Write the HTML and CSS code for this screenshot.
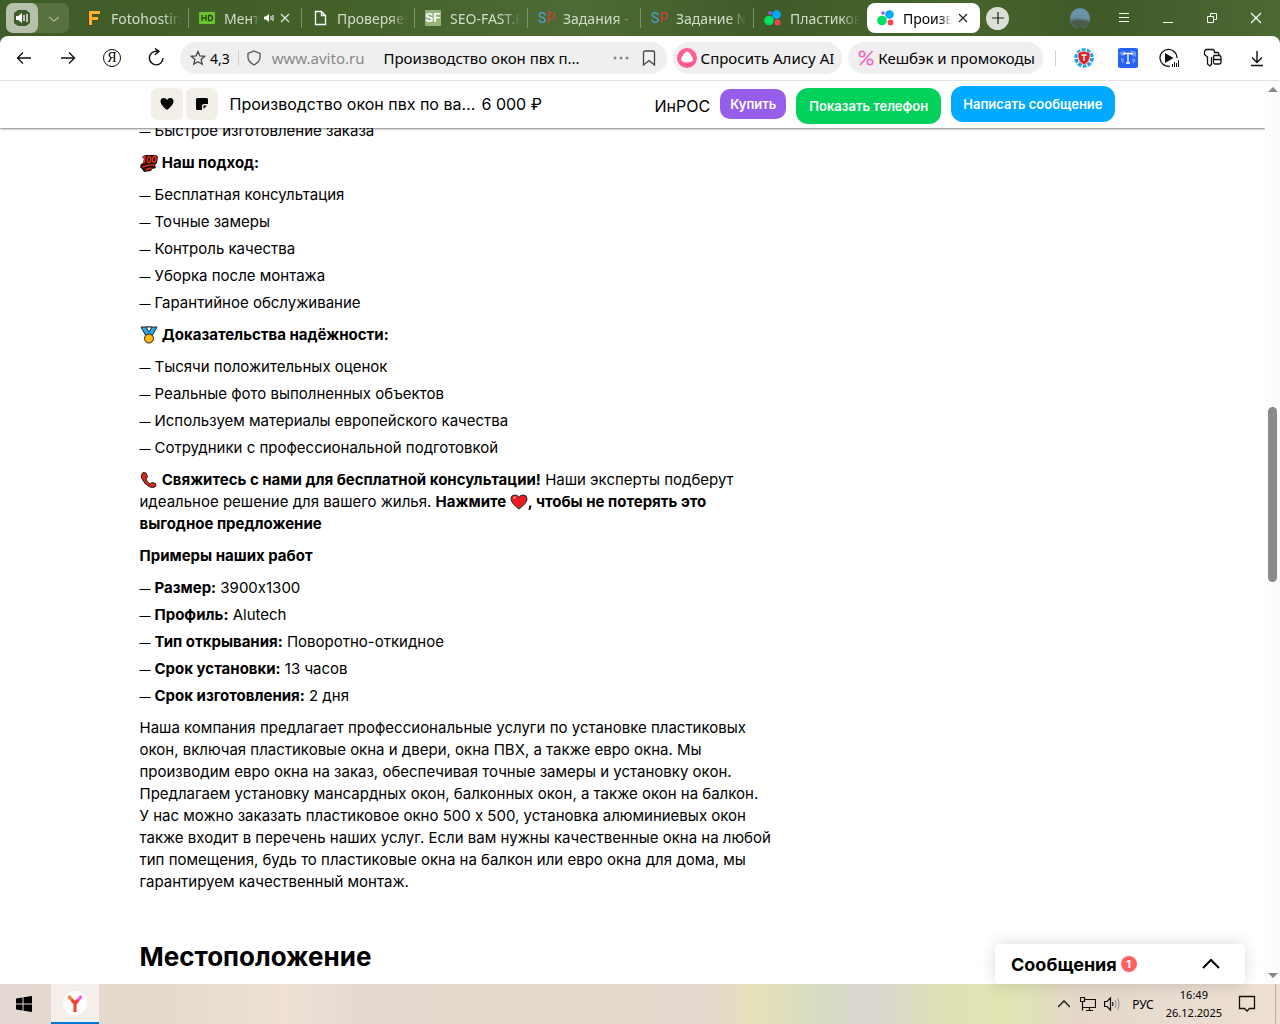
FILE: index.html
```html
<!DOCTYPE html>
<html lang="ru">
  <head>
    <meta charset="UTF-8" />
    <meta name="viewport" content="width=device-width, initial-scale=1.0" />
    <title>Производство окон пвх по вашим размерам</title>
    <link rel="stylesheet" href="styles.css">
  </head>
  <body>
    <!-- tabs -->
    <header class="tabs-bar">
      <div class="sound-group">
        <button class="sound" aria-label="Звук">
          <svg width="18" height="18" viewBox="0 0 18 18"><path d="M5 1h8l4 3v10l-4 3H5l-4-3V4z" fill="#3f5b29" /><path d="M3 7h2l4-3v10l-4-3H3z" fill="#fff" /><path d="M11 6v6M14 5v8" stroke="#fff" stroke-width="1.3" /></svg>
        </button>
        <button class="sound-more" aria-label="Ещё">
          <svg width="12" height="8" viewBox="0 0 12 8" fill="none" stroke="#aab99c" stroke-width="1.2"><path d="M1 2l5 4 5-4" /></svg>
        </button>
      </div>
      <nav class="tabs">
        <a class="tab" href="#">
          <svg width="16" height="16" viewBox="0 0 16 16"><path d="M2 1h11v4H6v2h6v4H6v5H2z" fill="#5d3d0c" /><path d="M3 1h11v3H6v3h6v3H6v5H3z" fill="#ffb22e" /></svg>
          <span class="tab-name">Fotohosting</span>
        </a>
        <a class="tab" href="#">
          <svg width="16" height="16" viewBox="0 0 16 16"><rect y="2" width="16" height="12" rx="1" fill="#69c42f" /><path d="M3 5v6M7 5v6M3 8h4M9.500 5.500v5h1.500q2.500 0 2.500-2.500t-2.500-2.500z" fill="none" stroke="#27480f" stroke-width="1.300" /></svg>
          <span class="tab-name">Ментальный</span>
          <svg class="tab-small" width="10" height="10" viewBox="0 0 10 10"><path d="M0 3.500h2L5 1v8L2 6.500H0z" fill="#fff" /><path d="M7 3v4M9 2v6" stroke="#fff" /></svg>
          <svg class="tab-small" width="10" height="10" viewBox="0 0 10 10" stroke="#dfe6d8" stroke-width="1.300"><path d="M1 1l8 8M9 1l-8 8" /></svg>
        </a>
        <a class="tab" href="#">
          <svg width="16" height="16" viewBox="0 0 16 16" fill="none" stroke="#fff" stroke-width="1.300"><path d="M3.500 1.500h6l4 4v9h-10zM9.500 1.500v4h4" /></svg>
          <span class="tab-name">Проверяемые</span>
        </a>
        <a class="tab" href="#">
          <span class="fav-sf">SF</span>
          <span class="tab-name">SEO-FAST.RU</span>
        </a>
        <a class="tab" href="#">
          <span class="fav-sp">S<i>P</i></span>
          <span class="tab-name">Задания - выполнить</span>
        </a>
        <a class="tab" href="#">
          <span class="fav-sp">S<i>P</i></span>
          <span class="tab-name">Задание № 4</span>
        </a>
        <a class="tab last" href="#">
          <svg width="17" height="16" viewBox="0 0 17 16"><circle cx="12.500" cy="4.500" r="4.300" fill="#00aaff" /><circle cx="5" cy="10.500" r="4.800" fill="#04e061" /><circle cx="13.500" cy="12.500" r="2.900" fill="#ff4053" /><circle cx="6" cy="3" r="1.800" fill="#965eeb" /></svg>
          <span class="tab-name">Пластиковые</span>
        </a>
        <a class="tab active" href="#">
          <svg width="17" height="16" viewBox="0 0 17 16"><circle cx="12.500" cy="4.500" r="4.300" fill="#00aaff" /><circle cx="5" cy="10.500" r="4.800" fill="#04e061" /><circle cx="13.500" cy="12.500" r="2.900" fill="#ff4053" /><circle cx="6" cy="3" r="1.800" fill="#965eeb" /></svg>
          <span class="tab-name">Производство</span>
          <svg class="tab-small" width="10" height="10" viewBox="0 0 10 10" stroke="#222" stroke-width="1.200"><path d="M1 1l8 8M9 1l-8 8" /></svg>
        </a>
      </nav>
      <button class="new-tab" aria-label="Новая вкладка">
        <svg width="12" height="12" viewBox="0 0 12 12" stroke="#222" stroke-width="1.200"><path d="M6 0v12M0 6h12" /></svg>
      </button>
      <div class="window-buttons">
        <button aria-label="Профиль">
          <svg width="20" height="20" viewBox="0 0 20 20"><circle cx="10" cy="10" r="10" fill="#6a92a6" /><path d="M0 10q8-1 20 2a10 10 0 0 1-20-2z" fill="#5c7a80" /><path d="M1 14q3-3 9-2 6 0 9.500 2a10 10 0 0 1-18.500 0z" fill="#4d5c48" /></svg>
        </button>
        <button aria-label="Меню">
          <svg width="12" height="12" viewBox="0 0 12 12" stroke="#fff"><path d="M1 1.500h10M1 5.500h10M1 9.500h10" /></svg>
        </button>
        <button aria-label="Свернуть">
          <svg width="12" height="12" viewBox="0 0 12 12" stroke="#fff"><path d="M1 10.500h10" /></svg>
        </button>
        <button aria-label="Восстановить">
          <svg width="12" height="12" viewBox="0 0 12 12" fill="none" stroke="#fff"><path d="M1.500 4.500h6v6h-6zM4.500 4V1.500h6v6H8" /></svg>
        </button>
        <button aria-label="Закрыть">
          <svg width="12" height="12" viewBox="0 0 12 12" stroke="#fff" stroke-width="1.200"><path d="M1 1l10 10M11 1L1 11" /></svg>
        </button>
      </div>
    </header>

    <!-- address bar -->
    <div class="toolbar-wrap">
      <div class="toolbar">
        <div class="nav-buttons">
          <button aria-label="Назад">
            <svg width="20" height="20" viewBox="0 0 20 20" fill="none" stroke="#111" stroke-width="1.300"><path d="M17 10H3.500M9 4.500L3.500 10 9 15.500" /></svg>
          </button>
          <button aria-label="Вперёд">
            <svg width="20" height="20" viewBox="0 0 20 20" fill="none" stroke="#111" stroke-width="1.300"><path d="M3 10h13.500M11 4.500l5.500 5.500-5.500 5.500" /></svg>
          </button>
          <button class="ya" aria-label="Яндекс">Я</button>
          <button aria-label="Обновить">
            <svg width="20" height="20" viewBox="0 0 20 20" fill="none" stroke="#111" stroke-width="1.400"><path d="M17 10a6.800 6.800 0 1 1-6-6.700h1.500M9 .5l4 2.800-4 3.500" /></svg>
          </button>
        </div>
        <div class="address">
          <svg width="16" height="16" viewBox="0 0 16 16" fill="none" stroke="#444" stroke-width="1.300"><path d="M8 1.500l1.900 4.400 4.800.4-3.600 3.200 1.100 4.700L8 11.700l-4.200 2.500 1.100-4.700-3.600-3.200 4.800-.4z" /></svg>
          <span class="rating">4,3</span>
          <span class="line"></span>
          <svg width="16" height="16" viewBox="0 0 16 16" fill="none" stroke="#555" stroke-width="1.300"><path d="M8 1l6 2.500v4q0 4-6 7.500-6-3.500-6-7.500v-4z" /></svg>
          <span class="host">www.avito.ru</span>
          <input class="url" type="text" aria-label="Адрес" value="Производство окон пвх п..." />
          <svg width="16" height="16" viewBox="0 0 16 16" fill="#888"><circle cx="2" cy="8" r="1.500" /><circle cx="8" cy="8" r="1.500" /><circle cx="14" cy="8" r="1.500" /></svg>
          <svg class="bookmark" width="16" height="16" viewBox="0 0 16 16" fill="none" stroke="#444" stroke-width="1.300"><path d="M2.500 15V2.500q0-1.500 1.500-1.500h8q1.500 0 1.500 1.500V15L8 10.500z" /></svg>
        </div>
        <button class="pill alice">
          <svg width="20" height="20" viewBox="0 0 20 20"><circle cx="10" cy="10" r="10" fill="#ff5c96" /><path d="M10 3.500q2 0 3.500 2.700l2 3.800q1.200 2.500-1 3.600-4.500 2-9 0-2.200-1.100-1-3.600l2-3.800Q8 3.500 10 3.500z" fill="#fff" /></svg>
          Спросить Алису AI
        </button>
        <button class="pill cashback">
          <svg width="16" height="16" viewBox="0 0 16 16" fill="none" stroke="#f564c3" stroke-width="1.600"><circle cx="4" cy="4" r="2.700" /><circle cx="12" cy="12" r="2.700" /><path d="M14.500 1L2 15" /></svg>
          Кешбэк и промокоды
        </button>
        <span class="line"></span>
        <div class="extensions">
          <div class="addons">
            <button aria-label="Защита">
              <svg width="20" height="20" viewBox="0 0 20 20"><circle cx="10" cy="10" r="8" fill="none" stroke="#239de8" stroke-width="3.600" stroke-dasharray="3.700 1.330" /><path d="M10 3l6 1.500V9q0 5-6 8-6-3-6-8V4.500z" fill="#d7262e" stroke="#fff" stroke-width=".6" /><path d="M7.500 7h5M10 7v6" stroke="#fff" stroke-width="1.300" /></svg>
            </button>
            <button aria-label="Переводчик">
              <svg width="20" height="20" viewBox="0 0 20 20"><rect width="20" height="20" rx="2" fill="#2763ef" /><path d="M1 5l4-2 3 1-2 3-2 1zM12 2l6 2v5l-3-1zM3 10l3 1-1 5-2-3zM14 10l4 2-3 4z" fill="#6f9af7" /><path d="M6 7V5.500h8V7M10 5.500V15M8 15h4" fill="none" stroke="#fff" stroke-width="1.300" /></svg>
            </button>
          </div>
          <button aria-label="Видео">
            <svg width="20" height="20" viewBox="0 0 20 20"><path d="M11 18.200A8.500 8.500 0 1 1 18 10" fill="none" stroke="#111" stroke-width="1.300" /><path d="M6 5l8.500 5L6 15z" fill="#111" /><path d="M13.500 16v3M15.500 14v5M17.500 15v4M19.500 12v7" stroke="#111" /></svg>
          </button>
          <button aria-label="Пароли">
            <svg width="20" height="20" viewBox="0 0 20 20" fill="none" stroke="#111" stroke-width="1.300"><path d="M8.500 9v7.500L7 18l-2.500-2V9L1.500 6.500V3L3 1.500h7L11.500 3v2M11 4.500h3.500Q16 4.500 16 7.500M11.500 7.500H16q2 0 2 2V14q0 2-2 2h-4q-1.500 0-1.500-1.500V9q0-1.500 1-1.500zM10.500 11.500H18" /></svg>
          </button>
          <button aria-label="Загрузки">
            <svg width="20" height="20" viewBox="0 0 20 20" fill="none" stroke="#111" stroke-width="1.400"><path d="M10 3v11M5 9.500l5 5 5-5M4 17.500h12" /></svg>
          </button>
        </div>
      </div>
    </div>

    <!-- page -->
    <div class="page">
      <div class="page-body">
        <div class="item-bar">
          <div class="item-bar-inner">
            <div class="item-actions">
              <button aria-label="В избранное">
                <svg width="14" height="14" viewBox="0 0 14 14"><path d="M7 13Q.5 8 .5 4.500.5 1 3.800 1 6 1 7 3q1-2 3.200-2 3.300 0 3.300 3.500Q13.500 8 7 13z" /></svg>
              </button>
              <button aria-label="Заметка">
                <svg width="12" height="12" viewBox="0 0 12 12"><path d="M1.500 0h9Q12 0 12 1.500V6H8Q6 6 6 8v4H1.500Q0 12 0 10.500v-9Q0 0 1.500 0zM7.500 7.500H11L7.500 11z" /></svg>
              </button>
            </div>
            <span class="item-title">Производство окон пвх по вашим размерам</span>
            <span class="item-price">6 000 ₽</span>
            <div class="contact">
              <span class="seller">ИнРОС</span>
              <button class="btn buy">Купить</button>
              <button class="btn phone">Показать телефон</button>
              <button class="btn write">Написать сообщение</button>
            </div>
          </div>
        </div>

        <main class="content">
          <div class="description">
            <ul>
              <li>Быстрое изготовление заказа</li>
            </ul>
            <p>
              <svg class="emoji" width="18" height="18" viewBox="0 0 18 18"><path d="M2 3l3-2h11l2 2-1 6-2 2 1 3-4 1-1 2-7 1-2-3-2-2 1-3 2-1 1-4z" fill="#2a0d08" /><g fill="none" stroke="#e2331c" stroke-width="1.400"><path d="M3 4l2-1.500L4 9.500M2.500 13q7-2.500 12-2M5.500 15.800q3-1.300 6-1.500" /><ellipse cx="9" cy="5.500" rx="1.700" ry="3" transform="rotate(12 9 5.500)" /><ellipse cx="14.200" cy="5.200" rx="1.700" ry="3" transform="rotate(12 14.200 5.200)" /></g></svg>
              <b>Наш подход:</b>
            </p>
            <ul>
              <li>Бесплатная консультация</li>
              <li>Точные замеры</li>
              <li>Контроль качества</li>
              <li>Уборка после монтажа</li>
              <li>Гарантийное обслуживание</li>
            </ul>
            <p>
              <svg class="emoji" width="18" height="18" viewBox="0 0 18 18" stroke="#222"><path d="M1 1h16l-5 9H6z" fill="#24a8e8" /><path d="M6 1l3 5 3-5z" fill="#fff" /><circle cx="9" cy="12.500" r="4.500" fill="#ffb70f" /></svg>
              <b>Доказательства надёжности:</b>
            </p>
            <ul>
              <li>Тысячи положительных оценок</li>
              <li>Реальные фото выполненных объектов</li>
              <li>Используем материалы европейского качества</li>
              <li>Сотрудники с профессиональной подготовкой</li>
            </ul>
            <p>
              <svg class="emoji" width="18" height="18" viewBox="0 0 18 18"><path d="M3 1.500Q0 4 2 8q3 6 8 8 4 1.500 6-1l-.5-2.500-3.500-1-2 1.500Q7 11.500 6 8l1.500-2-1.500-4z" fill="#d82819" stroke="#222" /></svg>
              <b>Свяжитесь с нами для бесплатной консультации!</b> Наши эксперты подберут идеальное решение для вашего жилья.
              <b>Нажмите <svg class="emoji" width="18" height="18" viewBox="0 0 18 18"><path d="M9 16Q1 10 1 6q0-4 4-4 3 0 4 2.500Q10 2 13 2q4 0 4 4 0 4-8 10z" fill="#ed1c24" stroke="#222" /><path d="M4 6q0-2 2-2" fill="none" stroke="#ff9b9b" stroke-width="1.500" /></svg>, чтобы не потерять это выгодное предложение</b>
            </p>
            <p><b>Примеры наших работ</b></p>
            <ul>
              <li><b>Размер:</b> 3900х1300</li>
              <li><b>Профиль:</b> Alutech</li>
              <li><b>Тип открывания:</b> Поворотно-откидное</li>
              <li><b>Срок установки:</b> 13 часов</li>
              <li><b>Срок изготовления:</b> 2 дня</li>
            </ul>
            <p>Наша компания предлагает профессиональные услуги по установке пластиковых окон, включая пластиковые окна и двери, окна ПВХ, а также евро окна. Мы производим евро окна на заказ, обеспечивая точные замеры и установку окон. Предлагаем установку мансардных окон, балконных окон, а также окон на балкон. У&nbsp;нас можно заказать пластиковое окно 500 х 500, установка алюминиевых окон также входит в перечень наших услуг. Если вам нужны качественные окна на любой тип помещения, будь то пластиковые окна на балкон или евро окна для дома, мы гарантируем качественный монтаж.</p>
          </div>
          <h2>Местоположение</h2>
        </main>
      </div>
      <div class="scrollbar">
        <svg width="10" height="5" viewBox="0 0 10 5" fill="#888"><path d="M5 0l5 5H0z" /></svg>
        <div class="track"><div class="thumb"></div></div>
        <svg width="10" height="5" viewBox="0 0 10 5" fill="#888"><path d="M0 0h10L5 5z" /></svg>
      </div>
      <button class="messages">
        Сообщения <span class="count">1</span>
        <svg width="18" height="12" viewBox="0 0 18 12" fill="none" stroke="#000" stroke-width="2"><path d="M1 10l8-8 8 8" /></svg>
      </button>
    </div>

    <footer class="taskbar">
      <button class="task" aria-label="Пуск">
        <svg width="16" height="16" viewBox="0 0 16 16"><path d="M0 2.500L6.500 1.500V7.500H0zM7.500 1.300L16 0v7.500H7.500zM0 8.500h6.500v6L0 13.500zM7.500 8.500H16V16l-8.500-1.300z" /></svg>
      </button>
      <button class="task current" aria-label="Яндекс Браузер">
        <svg width="24" height="24" viewBox="0 0 24 24" fill="none" stroke-width="3"><circle cx="12" cy="12" r="12" fill="#fff" /><path d="M12 13l6.500-8" stroke="#f25be0" /><path d="M5.500 5l6.500 7.500" stroke="#ff7524" /><path d="M9 9l3 3.500 3-3.500M12 12v9" stroke="#ff3b26" /></svg>
      </button>
      <div class="tray">
        <svg width="12" height="8" viewBox="0 0 12 8" fill="none" stroke="#111" stroke-width="1.300"><path d="M0 7l6-6 6 6" /></svg>
        <svg width="16" height="16" viewBox="0 0 16 16" fill="none" stroke="#111" stroke-width="1.200"><path d="M5 3.500h10.500v8H3M.5 1.500h4v4h-4zM2.500 5.500v9M9.500 12v2.500M6 14.500h7" /></svg>
        <svg width="16" height="16" viewBox="0 0 16 16" fill="none" stroke="#111" stroke-width="1.200"><path d="M.6 5.500H3L6.500 2v12L3 10.500H.6zM8.500 6q1 2 0 4" /><path d="M11 4q2 4 0 8M13.500 2q3 6 0 12" stroke="#999" /></svg>
        <span class="lang">РУС</span>
        <div class="clock">
          <span>16:49</span>
          <span>26.12.2025</span>
        </div>
        <svg class="notice" width="18" height="18" viewBox="0 0 18 18" fill="none" stroke="#111" stroke-width="1.300"><path d="M1.500 1.500h15v12h-5L9 16l-2.500-2.500h-5z" /></svg>
      </div>
    </footer>
  </body>
</html>
```

FILE: styles.css
```css
* {
  box-sizing: border-box;
}

body {
  margin: 0;
  height: 100vh;
  display: flex;
  flex-direction: column;
  overflow: hidden;
  font-family: Inter, "Liberation Sans", sans-serif;
  color: #000;
}

button {
  padding: 0;
  border: none;
  background: none;
  font-family: inherit;
  color: inherit;
  cursor: pointer;
}

svg {
  flex: none;
}

/* tabs */
.tabs-bar,
.toolbar-wrap {
  background: linear-gradient(to right, #405c29, #436029 25%, #4d6b35 45%, #405b28 60%, #47652d 75%, #3f5a27 85%, #4c6833);
  font-family: "Noto Sans", "Open Sans", sans-serif;
}

.tabs-bar {
  display: flex;
  align-items: center;
  height: 36px;
  padding: 0 0 0 6px;
}

.sound-group {
  display: flex;
  width: 63px;
  height: 30px;
  margin-right: 7px;
  border-radius: 7px;
  background: #58713f;
}

.sound {
  display: grid;
  place-items: center;
  width: 32px;
  border-radius: 7px;
  background: #b6c1ac;
}

.sound-more {
  flex: 1;
}

.tabs {
  display: flex;
  flex: 0 1 904px;
  min-width: 0;
}

.tab {
  display: flex;
  flex: 1;
  align-items: center;
  gap: 9px;
  min-width: 0;
  height: 30px;
  padding: 0 8px 0 10px;
  font-size: 14px;
  color: #d3dbca;
  text-decoration: none;
  background: linear-gradient(#7f9270, #7f9270) right / 1px 20px no-repeat;
}

.tab.last {
  background: none;
}

.tab.active {
  border-radius: 8px;
  background: #fff;
  color: #000;
}

.tab-name {
  flex: 1;
  min-width: 0;
  overflow: hidden;
  white-space: nowrap;
  mask-image: linear-gradient(to right, #000 75%, transparent);
}

.tab .tab-small {
  margin-left: -4px;
}

.tab .tab-small:last-child {
  margin-left: -3px;
  margin-right: 4px;
}

.fav-sf {
  flex: none;
  width: 16px;
  font: bold 12px/16px "Liberation Sans", sans-serif;
  text-align: center;
  background: #94b478;
  color: #fff;
}

.fav-sp {
  flex: none;
  width: 16px;
  font: 14px/16px Roboto, sans-serif;
  color: #45a5d8;
}

.fav-sp i {
  font-style: normal;
  color: #d23d3d;
}

.new-tab {
  display: grid;
  place-items: center;
  width: 23px;
  height: 23px;
  margin-left: 6px;
  border-radius: 50%;
  background: #dae0d5;
}

.window-buttons {
  display: flex;
  margin-left: auto;
}

.window-buttons button {
  display: grid;
  place-items: center;
  width: 44px;
  height: 30px;
}

.window-buttons button:last-child {
  margin-right: 2px;
}

/* address bar */
.toolbar {
  display: flex;
  align-items: center;
  height: 45px;
  padding: 0 1px 0 2px;
  border-bottom: 1px solid #e2e2e2;
  border-radius: 8px 8px 0 0;
  background: #fff;
}

.nav-buttons,
.extensions,
.addons {
  display: flex;
}

.nav-buttons button,
.extensions button {
  display: grid;
  place-items: center;
  width: 44px;
  height: 32px;
}

.extensions {
  margin-left: 6px;
}

.addons {
  margin-right: -3px;
}

.nav-buttons .ya {
  width: 18px;
  height: 18px;
  margin: 7px 13px;
  border: 1px solid #111;
  border-radius: 50%;
  font: 14px/16px "Liberation Serif", serif;
}

.line {
  flex: none;
  width: 1px;
  height: 16px;
  background: #d0d0d0;
}

.address {
  display: flex;
  flex: 1;
  align-items: center;
  min-width: 0;
  height: 32px;
  margin-left: 2px;
  padding: 0 10px;
  border-radius: 16px;
  background: #efefef;
  font-size: 15px;
}

.rating {
  margin: 0 8px 0 4px;
  font-size: 14px;
}

.address .line + svg {
  margin-left: 7px;
}

.host {
  margin: 0 19px 0 10px;
  color: #888;
}

.url {
  flex: 1;
  min-width: 0;
  padding: 0;
  border: none;
  outline: none;
  background: none;
  font: inherit;
}

.bookmark {
  margin-left: 12px;
}

.pill {
  display: flex;
  align-items: center;
  gap: 4px;
  height: 32px;
  margin-left: 6px;
  padding: 0 8px 0 4px;
  border-radius: 16px;
  background: #efefef;
  font-size: 15px;
  white-space: nowrap;
}

.cashback {
  padding-left: 10px;
}

.toolbar > .line {
  margin-left: 12px;
}

/* page */
.page {
  position: relative;
  display: flex;
  flex: 1;
  min-height: 0;
  background: #fff;
}

.page-body {
  flex: 1;
  min-width: 0;
  overflow: hidden;
}

.item-bar {
  position: relative;
  z-index: 1;
  height: 47px;
  background: #fff;
  box-shadow: 0 1px 2px rgba(0, 0, 0, 0.5);
}

.item-bar-inner {
  display: flex;
  align-items: center;
  max-width: 964px;
  height: 46px;
  margin: 0 auto;
  font-size: 16px;
}

.item-actions {
  display: flex;
  gap: 3px;
}

.item-actions button {
  display: grid;
  place-items: center;
  width: 32px;
  height: 32px;
  border-radius: 6px;
  background: #f2efe8;
}

.item-title {
  width: 248px;
  margin: 0 4px 0 12px;
  overflow: hidden;
  white-space: nowrap;
  text-overflow: ellipsis;
}

.contact {
  display: flex;
  align-items: flex-start;
  gap: 10px;
  margin-left: auto;
  padding-top: 4px;
}

.seller {
  line-height: 40px;
}

.btn {
  height: 36px;
  padding: 0 13px;
  border-radius: 12px;
  font-size: 13px;
  font-weight: 600;
  color: #fff;
  white-space: nowrap;
}

.buy {
  height: 30px;
  padding: 0 10px;
  margin-top: 3px;
  border-radius: 10px;
  background: #965eeb;
}

.phone {
  margin-top: 2px;
  background: #02d15c;
}

.write {
  padding: 0 12px;
  background: #00aaff;
}

.content {
  max-width: 986px;
  margin: -8px auto 0;
}

.description {
  max-width: 636px;
  font-size: 15px;
  line-height: 22px;
}

.description p,
.description ul {
  margin: 0 0 10px;
  padding: 0;
  list-style: none;
}

.description li {
  margin-bottom: 5px;
}

.description li::before {
  content: "—";
  display: inline-block;
  width: 15px;
  font-size: 11px;
  line-height: 12px;
}

.emoji {
  margin: -2px 0;
  vertical-align: -2px;
}

h2 {
  margin: 46px 0 0;
  font-size: 26px;
  line-height: 36px;
}

.scrollbar {
  display: flex;
  flex-direction: column;
  align-items: center;
  width: 15px;
  padding: 6px 0;
  background: #fcfcfc;
}

.track {
  flex: 1;
  padding-top: 315px;
}

.thumb {
  width: 9px;
  height: 175px;
  border-radius: 5px;
  background: #8b8b8b;
}

.messages {
  position: absolute;
  right: 35px;
  bottom: 0;
  display: flex;
  align-items: center;
  width: 250px;
  height: 40px;
  padding: 0 25px 0 16px;
  border-radius: 4px;
  background: #fff;
  box-shadow: 0 0 16px rgba(0, 0, 0, 0.15);
  font-size: 18px;
  font-weight: 700;
}

.count {
  width: 16px;
  height: 16px;
  margin-left: 4px;
  border-radius: 50%;
  background: #ff6163;
  font-size: 11px;
  line-height: 16px;
  color: #fff;
}

.messages svg {
  margin-left: auto;
}

/* taskbar */
.taskbar {
  display: flex;
  height: 40px;
  background: linear-gradient(to right, #e6d8d3, #e5d9cb 12%, #eee1d4 22%, #e6d9d1 28%, #e5d9cb 40%, #e6d9cf 55%, #e5e0b8 59%, #d8dcc4 64%, #dad6d2 68%, #e0e1b5 74%, #dfe5b2 79%, #e5d8ca 84%, #e8dbd0 92%, #eee0d0);
  font-family: "Noto Sans", "Open Sans", sans-serif;
  font-size: 12px;
}

.task {
  display: grid;
  place-items: center;
  width: 48px;
  margin-right: 3px;
}

.current {
  background: #f5efec;
  border-bottom: 2px solid #0078d7;
}

.tray {
  display: flex;
  align-items: center;
  gap: 8px;
  margin-left: auto;
  margin-right: 4px;
  padding-right: 19px;
  border-right: 1px solid #b8aea2;
}

.tray > svg:first-child {
  margin-right: 2px;
}

.lang {
  margin: 0 4px;
}

.clock {
  display: flex;
  flex-direction: column;
  font-size: 11px;
  line-height: 18px;
  text-align: center;
}

.notice {
  margin-left: 8px;
}
```
